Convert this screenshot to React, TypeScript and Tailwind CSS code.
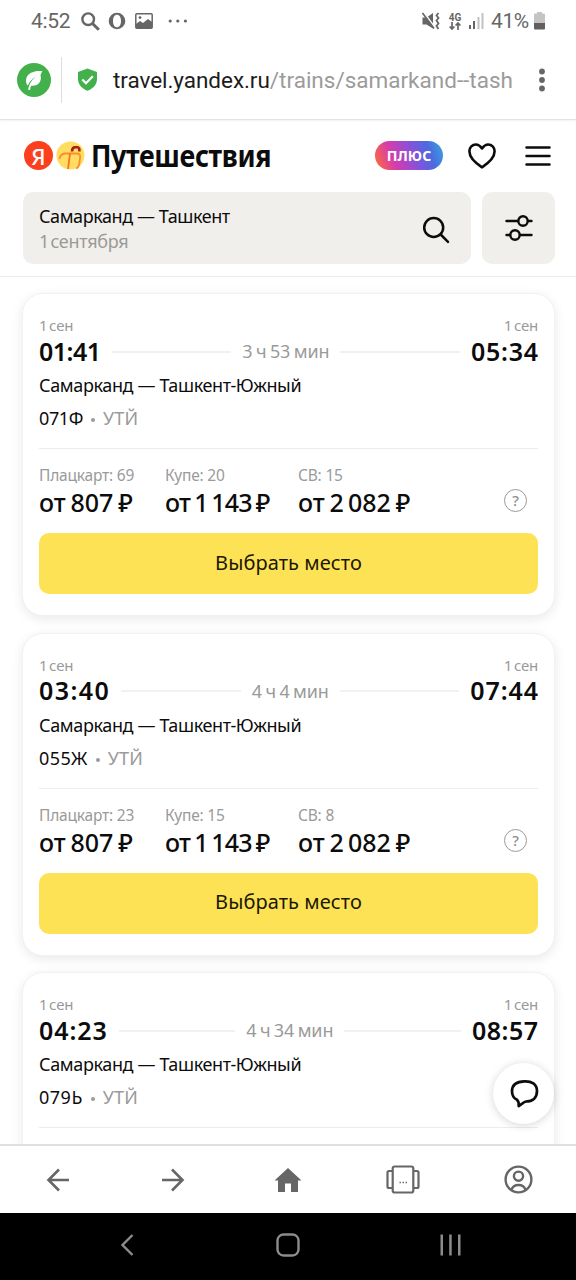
import React from 'react';

interface Fare {
  name: string;
  seats: number;
  price: string;
  className: string;
  priceClass: string;
}

interface Train {
  id: string;
  idClass: string;
  departure: string;
  departureClass: string;
  arrival: string;
  arrivalClass: string;
  duration: string;
  fares: Fare[];
}

const makeFares = (platz: number, coupe: number, sv: number): Fare[] => [
  { name: 'Плацкарт', seats: platz, price: '807', className: 'w-[126px]', priceClass: 'tracking-[-0.05px] [word-spacing:-1.5px]' },
  { name: 'Купе', seats: coupe, price: '1\u2009143', className: 'w-[133px]', priceClass: 'tracking-[-0.75px] [word-spacing:-1.8px]' },
  { name: 'СВ', seats: sv, price: '2\u2009082', className: 'flex-1', priceClass: 'tracking-[-0.05px] [word-spacing:-1.5px]' },
];

const trains: Train[] = [
  {
    id: '071Ф', idClass: 'tracking-[-0.4px]',
    departure: '01:41', departureClass: 'tracking-[-0.5px]',
    arrival: '05:34', arrivalClass: 'tracking-[0.7px] -mr-[0.7px]',
    duration: '3 ч 53 мин', fares: makeFares(69, 20, 15),
  },
  {
    id: '055Ж', idClass: 'tracking-[0.4px]',
    departure: '03:40', departureClass: 'tracking-[1.4px]',
    arrival: '07:44', arrivalClass: 'tracking-[0.9px] -mr-[0.9px]',
    duration: '4 ч 4 мин', fares: makeFares(23, 15, 8),
  },
  {
    id: '079Ь', idClass: 'tracking-[0.5px]',
    departure: '04:23', departureClass: 'tracking-[0.9px]',
    arrival: '08:57', arrivalClass: 'tracking-[0.5px] -mr-[0.5px]',
    duration: '4 ч 34 мин', fares: [],
  },
];

const StatusBar: React.FC = () => (
  <div className="flex h-[42px] items-center justify-between pl-[31px] pr-[31px] font-['Roboto',sans-serif] text-[21px] text-[#666]">
    <div className="flex items-center">
      <span className="w-[50px] pt-[2px] tracking-[-0.3px]">4:52</span>
      <svg width="19" height="19" viewBox="0 0 19 19" fill="none" stroke="currentColor" strokeWidth="2.4">
        <circle cx="7.2" cy="7.2" r="5.8" />
        <path d="M11.5 11.5 17.8 17.8" strokeWidth="3" />
      </svg>
      <svg className="ml-2" width="18" height="18" viewBox="0 0 18 18" fill="currentColor">
        <path fillRule="evenodd" d="M9 .7a8.3 8.3 0 1 0 0 16.600A8.300 8.300 0 0 0 9 .700Zm0 2c2.600 0 4 2.600 4 6.300s-1.400 6.300-4 6.300S5 12.700 5 9s1.400-6.300 4-6.300Z" />
      </svg>
      <svg className="ml-[9px]" width="18" height="16" viewBox="0 0 18 16">
        <rect x=".8" y=".8" width="16.4" height="14.4" rx="1" fill="none" stroke="currentColor" strokeWidth="1.5" />
        <path d="M1 11l4-3 3 2 5-4 4 3v6H1Z" fill="currentColor" />
        <circle cx="5" cy="4.6" r="1.4" fill="currentColor" />
      </svg>
      <svg className="ml-[15px]" width="20" height="4" viewBox="0 0 20 4" fill="currentColor">
        <circle cx="2.2" cy="2" r="1.6" />
        <circle cx="9.8" cy="2" r="1.6" />
        <circle cx="17.4" cy="2" r="1.6" />
      </svg>
    </div>
    <div className="flex items-center">
      <svg width="18" height="18" viewBox="0 0 18 18" fill="none" stroke="currentColor">
        <path d="M.5 5.500h4L11 1v15.500L4.500 12.500h-4Z" fill="currentColor" stroke="none" />
        <path d="M2 .5 14 17" stroke="#fdfdfd" strokeWidth="1.5" />
        <path d="M.5 1 12 16.500" strokeWidth="1.6" />
        <path d="M16.500 1l-2 2.500 2 2.500-2 2.500 2 3-2 2.500 2 3" strokeWidth="1.8" />
      </svg>
      <div className="ml-[8px] flex w-[14px] flex-col items-center">
        <span className="text-[10px] font-bold leading-[9px]">4G</span>
        <svg width="12" height="8" viewBox="0 0 12 8" fill="none" stroke="currentColor" strokeWidth="1.7">
          <path d="M3 0v7M.6 4.500 3 7l2.400-2.500M9 8V1M6.600 3.500 9 1l2.400 2.500" />
        </svg>
      </div>
      <svg className="ml-[7px]" width="15" height="16" viewBox="0 0 15 16" fill="currentColor">
        <rect x="0" y="12" width="2" height="4" />
        <rect x="4" y="8" width="2" height="8" />
        <rect x="8.5" y="4" width="2" height="12" opacity=".4" />
        <rect x="12.5" y="0" width="2" height="16" opacity=".4" />
      </svg>
      <span className="ml-[7px] w-[43px] pt-[2px] tracking-[-0.4px]">41%</span>
      <svg width="11" height="18" viewBox="0 0 11 18">
        <path d="M3 0h5v1.500h2a1 1 0 0 1 1 1V11H0V2.500a1 1 0 0 1 1-1h2Z" fill="#c4c4c4" />
        <path d="M0 11h11v5.500a1 1 0 0 1-1 1H1a1 1 0 0 1-1-1Z" fill="#606060" />
      </svg>
    </div>
  </div>
);

const AddressBar: React.FC = () => (
  <div className="flex h-[78px] items-center border-b border-[#e2e2e2] pb-[2px] pl-[17px] font-['Roboto',sans-serif] shadow-[0_1px_2px_rgba(0,0,0,0.06)]">
    <svg width="34" height="34" viewBox="0 0 34 34">
      <circle cx="17" cy="17" r="17" fill="#43b14b" />
      <path d="M25.500 8.300c-6-.9-16.500.8-16.500 9.500 0 2.300.7 3.700 1.800 4.800 1.500-3.500 4-6.600 8-8.900-4 3.300-6.600 7-7.700 13l2 .3c.2-1.700.5-3 1-4.200 7.700.8 11-5 9.400-10.500.3-1.500 1-2.700 2-4Z" fill="#fff" />
    </svg>
    <div className="ml-[10px] h-[46px] w-px bg-[#dedede]" />
    <svg className="ml-[15px]" width="21" height="23" viewBox="0 0 21 23">
      <path d="M10.500.4 20 4v7c0 5.500-3.800 9.800-9.500 11.700C4.800 20.800 1 16.500 1 11V4Z" fill="#43b14b" />
      <path d="M5.300 11.500 9 15.200l6.800-7" fill="none" stroke="#fff" strokeWidth="2.2" />
    </svg>
    <div className="ml-[15px] flex-1 whitespace-nowrap pt-[3px] text-[22.5px] text-[#9b9b9b]">
      <span className="tracking-[-0.05px] text-[#1c1c1c]">travel.yandex.ru</span>/trains/samarkand--tash
    </div>
    <svg className="mr-[31px]" width="6" height="24" viewBox="0 0 6 24" fill="#666">
      <circle cx="3" cy="3.5" r="2.9" />
      <circle cx="3" cy="12" r="2.9" />
      <circle cx="3" cy="20.5" r="2.9" />
    </svg>
  </div>
);

const Header: React.FC = () => (
  <header className="border-b border-[#ececec]">
    <div className="flex h-[72px] items-center pb-px pl-[24px] pr-[25px]">
      <div className="flex h-[29px] w-[29px] items-center justify-center rounded-full bg-[#fc3f1d] text-[22px] leading-none text-white">
        <span className="font-medium">Я</span>
      </div>
      <svg className="ml-[3px]" width="29" height="29" viewBox="0 0 29 29" fill="none">
        <circle cx="14.5" cy="14.5" r="14" fill="#ffdd60" />
        <path d="M3.500 18c.5-3.500 1.800-5.200 5.500-5.500h11.500c3 0 4 1.500 3.600 4.500l-1 6.500c-.4 2-1.300 3.500-3 4" stroke="#fb8c32" strokeWidth="1.8" />
        <path d="M14 12.500 12 28" stroke="#f9702c" strokeWidth="1.8" />
        <path d="M16 10.500c.2-3 .8-4.200 3-4.200h2.200c1.900 0 2.400 1.200 2.100 4.200" stroke="#a81c1c" strokeWidth="2.6" />
      </svg>
      <div className="ml-[6px] w-[180px]">
        <h1 className="origin-left scale-x-[0.895] whitespace-nowrap text-[30px] font-bold leading-[40px] tracking-[-0.4px]">Путешествия</h1>
      </div>
      <div className="ml-auto flex h-[29px] w-[68px] items-center justify-center rounded-full bg-[linear-gradient(70deg,#ff6a3a_2%,#d63cab_28%,#8a50d8_55%,#4b6ae0_78%,#38a8de_100%)] text-[14px] font-bold tracking-[0.1px] text-white">
        ПЛЮС
      </div>
      <svg className="ml-[25px]" width="28" height="26" viewBox="0 0 28 26" fill="none" stroke="#0c0c0c" strokeWidth="2.6" strokeLinejoin="round">
        <path d="M14 5.500C12 2.600 10.300 1.500 7.900 1.500 4.300 1.500 1.400 4.300 1.400 8.300c0 6.200 6 11.700 12.600 16 6.600-4.300 12.600-9.800 12.600-16 0-4-2.900-6.800-6.500-6.800-2.400 0-4.100 1.100-6.100 4Z" />
      </svg>
      <svg className="ml-[29px]" width="26" height="20" viewBox="0 0 26 20" stroke="#0c0c0c" strokeWidth="2.5" strokeLinecap="round">
        <path d="M1.500 1.500h23M1.500 10h23M1.500 18.500h23" />
      </svg>
    </div>
    <div className="flex gap-[11px] pb-3 pl-[23px] pr-[21px]">
      <div className="flex h-[72px] flex-1 items-center justify-between rounded-[10px] bg-[#f1efeb] pl-4 pr-[21px]">
        <div className="pt-[2px] text-[18px] leading-[25px]">
          <div className="tracking-[-0.42px]">Самарканд — Ташкент</div>
          <div className="tracking-[-0.3px] text-[#9c9a97] [word-spacing:-3px]">1 сентября</div>
        </div>
        <svg className="mt-[3px]" width="28" height="28" viewBox="0 0 28 28" fill="none" stroke="#0c0c0c" strokeWidth="2.5" strokeLinecap="round">
          <circle cx="11.7" cy="11.5" r="9.5" />
          <path d="m18.700 18.500 7.300 7.300" />
        </svg>
      </div>
      <div className="flex h-[72px] w-[73px] items-center justify-center rounded-[10px] bg-[#f1efeb]">
        <svg width="28" height="26" viewBox="0 0 28 26" fill="none" stroke="#0c0c0c" strokeWidth="2.4" strokeLinecap="round">
          <path d="M1.500 6H13M23 6h3.500M1.500 20H5M15 20h11.500" />
          <circle cx="18" cy="6" r="4.7" />
          <circle cx="10" cy="20" r="4.7" />
        </svg>
      </div>
    </div>
  </header>
);

const TrainCard: React.FC<{ train: Train }> = ({ train }) => (
  <article className="h-[323px] shrink-0 rounded-[21px] border border-[#f2f2f2] bg-white px-4 pt-[21px] shadow-[0_3px_12px_rgba(0,0,0,0.09)]">
    <div className="flex justify-between text-[15px] leading-5 tracking-[-0.2px] text-[#9a9a9a] [word-spacing:-2px]">
      <span>1 сен</span>
      <span>1 сен</span>
    </div>
    <div className="flex h-8 items-center pt-px">
      <span className={`text-[25px] font-semibold ${train.departureClass}`}>{train.departure}</span>
      <span className="mx-[11px] h-[2px] flex-1 bg-[#f1f1f1]" />
      <span className="text-[18px] tracking-[-0.15px] text-[#9a9a9a] [word-spacing:-1px]">{train.duration}</span>
      <span className="mx-[11px] h-[2px] flex-1 bg-[#f1f1f1]" />
      <span className={`text-[25px] font-semibold ${train.arrivalClass}`}>{train.arrival}</span>
    </div>
    <div className="mt-1 text-[18px] leading-7 tracking-[-0.37px]">Самарканд — Ташкент-Южный</div>
    <div className="mt-[5px] flex items-center text-[18px] leading-7">
      <span className={train.idClass}>{train.id}</span>
      <span className="mx-2 mt-1 h-1 w-1 rounded-full bg-[#9a9a9a]" />
      <span className="tracking-[0.2px] text-[#9a9a9a]">УТЙ</span>
    </div>
    <div className="mt-[16px] flex border-t border-[#ededed] pt-4">
      {train.fares.map((fare) => (
        <div key={fare.name} className={fare.className}>
          <div className="text-[15.5px] leading-5 tracking-[-0.2px] text-[#9a9a9a]">{fare.name}: {fare.seats}</div>
          <div className={`whitespace-nowrap text-[25px] font-medium leading-[34px] ${fare.priceClass}`}>от {fare.price} ₽</div>
        </div>
      ))}
      {train.fares.length > 0 && (
        <div className="mr-[11px] mt-[24px] flex h-[23px] w-[23px] items-center justify-center rounded-full border-[1.5px] border-[#9a9a9a] text-[15px] font-medium leading-none text-[#8f8f8f]">?</div>
      )}
    </div>
    {train.fares.length > 0 && (
      <button className="mt-[14px] h-[61px] w-full rounded-[10px] bg-[#fee256] pb-[2px] text-[20px] tracking-[0.08px] text-[#1b1805]">Выбрать место</button>
    )}
  </article>
);

const BrowserBar: React.FC = () => (
  <div className="flex h-[69px] shrink-0 items-center justify-around border-t-2 border-[#e0e0e0] bg-white text-[#666]">
    <div className="flex flex-1 justify-center">
      <svg width="24" height="24" viewBox="0 0 24 24" fill="none" stroke="currentColor" strokeWidth="2.6"><path d="M23 12H2.500M13 1.500 2.500 12 13 22.500" /></svg>
    </div>
    <div className="flex flex-1 justify-center">
      <svg width="24" height="24" viewBox="0 0 24 24" fill="none" stroke="currentColor" strokeWidth="2.6"><path d="M1 12h20.500M11 1.500 21.500 12 11 22.500" /></svg>
    </div>
    <div className="flex flex-1 justify-center">
      <svg width="28" height="24" viewBox="0 0 28 24" fill="currentColor"><path d="M14 0 .5 12.500H4V24h7v-8.500h6V24h7V12.500h3.500Z" /></svg>
    </div>
    <div className="flex flex-1 justify-center">
      <svg width="34" height="29" viewBox="0 0 34 29" fill="none" stroke="currentColor" strokeWidth="2.2">
        <rect x="6.700" y="1.500" width="20.600" height="26" rx="2" />
        <path d="M6.500 6H3a1.500 1.500 0 0 0-1.500 1.500v14A1.500 1.500 0 0 0 3 23h3.500M27.500 6H31a1.500 1.500 0 0 1 1.500 1.500v14A1.500 1.500 0 0 1 31 23h-3.500" />
        <path d="M13.500 17.500h1.400M16.600 17.500H18M19.600 17.500H21" strokeWidth="1.3" />
      </svg>
    </div>
    <div className="flex flex-1 justify-center">
      <svg width="29" height="29" viewBox="0 0 29 29" fill="none" stroke="currentColor" strokeWidth="2.4">
        <circle cx="14.500" cy="14.500" r="12.900" />
        <circle cx="14.500" cy="11.200" r="4.600" />
        <path d="M7.500 25c1-3.500 3.700-5 7-5s6 1.500 7 5" />
      </svg>
    </div>
  </div>
);

const SystemNav: React.FC = () => (
  <div className="flex h-[67px] shrink-0 items-center justify-between bg-black pb-[3px] pl-[120px] pr-[115px] text-[#8c8c8c]">
    <svg width="14" height="22" viewBox="0 0 14 22" fill="none" stroke="currentColor" strokeWidth="2.4"><path d="M12.500 1 2.500 11l10 10" /></svg>
    <svg className="ml-[2px]" width="24" height="24" viewBox="0 0 24 24" fill="none" stroke="currentColor" strokeWidth="2.4"><rect x="1.500" y="1.500" width="21" height="21" rx="6" /></svg>
    <svg width="21" height="22" viewBox="0 0 21 22" fill="currentColor">
      <rect x=".5" y=".5" width="2.500" height="21" />
      <rect x="9.200" y=".5" width="2.500" height="21" />
      <rect x="18" y=".5" width="2.500" height="21" />
    </svg>
  </div>
);

export default function App() {
  return (
    <div className="flex h-[1280px] w-[576px] flex-col overflow-hidden bg-white font-['Noto_Sans',sans-serif] text-[#0c0c0c]">
      <StatusBar />
      <AddressBar />
      <Header />
      <main className="relative flex min-h-0 flex-1 flex-col gap-[16.5px] overflow-hidden bg-white pl-[22px] pr-[21px] pt-[16px]">
        {trains.map((train) => (
          <TrainCard key={train.id} train={train} />
        ))}
        <button className="absolute bottom-[20px] right-[22px] flex h-[61px] w-[61px] items-center justify-center rounded-full bg-white shadow-[0_1px_9px_rgba(0,0,0,0.17)]">
          <svg width="30" height="30" viewBox="0 0 30 30" fill="none" stroke="#0c0c0c" strokeWidth="2.7" strokeLinejoin="round">
            <path d="M15.500 2.300C22.500 2 28 5 28 12s-4.500 10.500-11 10.500c-1.800.3-3.500 2-7.300 4.500.3-3-.2-4.700-1.700-6.200-3-1.500-5-4.300-5-8.600C3 5.500 8 2.500 15.500 2.300Z" />
          </svg>
        </button>
      </main>
      <BrowserBar />
      <SystemNav />
    </div>
  );
}
